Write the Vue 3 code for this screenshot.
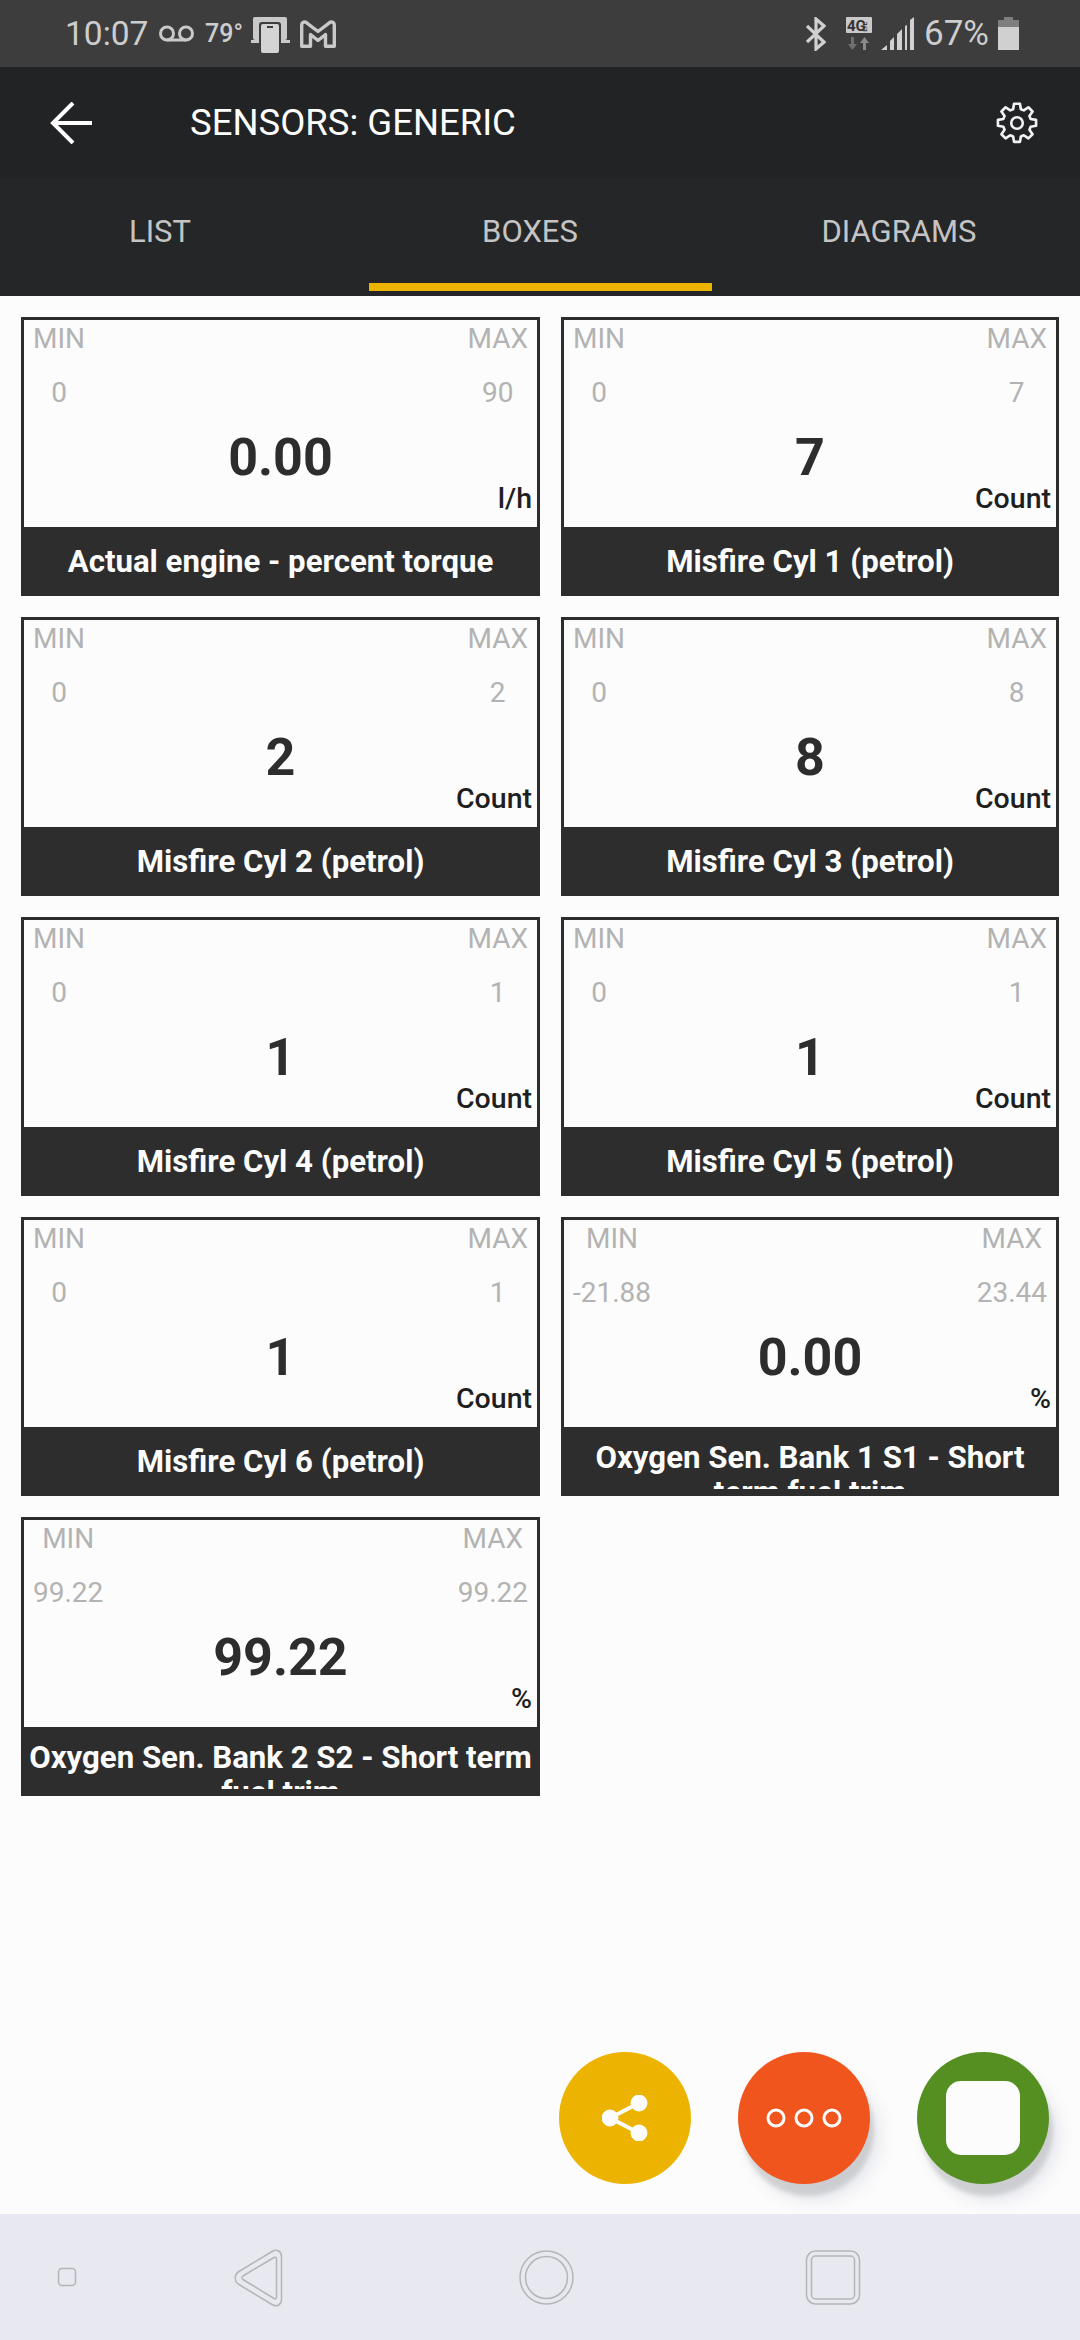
<template>
  <div class="page">
    <div class="status">
      <div class="status-left">
        <span class="time">10:07</span>
        <svg class="ic-vm" viewBox="0 0 35 17" fill="none" stroke="#c9c9c9" stroke-width="3">
          <circle cx="8" cy="8.5" r="6.5" />
          <circle cx="27" cy="8.5" r="6.5" />
          <path d="M8 15h19" />
        </svg>
        <span class="temp">79°</span>
        <svg class="ic-link" viewBox="0 0 39 36">
          <rect x="2" y="0" width="34" height="23" rx="2" fill="#c9c9c9" />
          <path d="M0 23h8v3H0zM29 23h10v3H29z" fill="#c9c9c9" />
          <rect x="8" y="5" width="22" height="31" rx="3" fill="#3d3d3d" />
          <rect x="10" y="7" width="18" height="29" rx="2" fill="#d4d4d4" />
          <rect x="16" y="9" width="6" height="2" fill="#3d3d3d" />
        </svg>
        <svg class="ic-mail" viewBox="0 0 36 28" fill="none" stroke="#c9c9c9" stroke-width="3.400" stroke-linejoin="round">
          <path d="M1.700 26.300V5c0-2.500 2-3.300 4-2.800L18 11.500l12.300-9.300c2-.5 4 .3 4 2.800v21.300H25.500V14.500L18 20.500l-7.500-6v11.800z" />
        </svg>
      </div>
      <div class="status-right">
        <svg class="ic-bt" viewBox="0 0 20 34" fill="none" stroke="#d0d0d0" stroke-width="3.200">
          <path d="M1 9l17 16-8 7V2l8 7L1 25" />
        </svg>
        <svg class="ic-4g" viewBox="0 0 26 33">
          <rect width="26" height="16" rx="1" fill="#c9c9c9" />
          <text x="1" y="14" class="net-4g">4G</text>
          <text x="0" y="0" class="net-lte" transform="translate(20.500 14.500) rotate(-90)">LTE</text>
          <path d="M5 20h3v7h3l-4.500 6L2 27h3z" fill="#6f6f6f" />
          <path d="M17 33h3v-7h3l-4.500-6L14 26h3z" fill="#8a8a8a" />
        </svg>
        <svg class="ic-signal" viewBox="0 0 33 33" fill="#d0d0d0">
          <path d="M0 33l6-5v5zM9 33V24l4-4v13zM16 33V17l5-5v21zM24 33V9l2-1v25zM29 33V3l4-3v33z" />
        </svg>
        <span class="pct">67%</span>
        <div class="battery">
          <div class="cap"></div>
          <div class="empty"></div>
          <div class="full"></div>
        </div>
      </div>
    </div>

    <div class="toolbar">
      <svg class="ic-back" viewBox="0 0 42 42" fill="none" stroke="#fff" stroke-width="4">
        <path d="M42 21H3M23 1L3 21l20 20" />
      </svg>
      <span class="screen-title">SENSORS: GENERIC</span>
      <svg class="ic-gear" viewBox="0 0 24 24" fill="none" stroke="#f2f2f2" stroke-width="1.500" stroke-linejoin="round">
        <circle cx="12" cy="12" r="3.300" />
        <path d="M10.300 1h3.400l.5 3.100 1.700.7 2.600-1.800 2.400 2.400-1.800 2.600.7 1.700 3.100.5v3.400l-3.100.5-.7 1.700 1.800 2.600-2.400 2.400-2.600-1.800-1.700.7-.5 3.100h-3.400l-.5-3.100-1.700-.7-2.600 1.800-2.400-2.400 1.800-2.600-.7-1.700-3.100-.5v-3.400l3.100-.5.7-1.700-1.800-2.600 2.400-2.400 2.600 1.800 1.700-.7z" />
      </svg>
    </div>

    <div class="tabs">
      <div v-for="t in tabs" :key="t.name" class="tab" :class="{ active: t.active }">
        <span class="tab-label" :style="{ paddingRight: t.shift + 'px' }">{{ t.name }}</span>
      </div>
    </div>

    <div class="content">
      <div class="grid">
        <div v-for="c in cards" :key="c.title" class="card">
          <div class="body">
            <div class="limits">
              <div class="limit">
                <span class="limit-label">MIN</span>
                <span class="limit-value">{{ c.min }}</span>
              </div>
              <div class="limit">
                <span class="limit-label">MAX</span>
                <span class="limit-value">{{ c.max }}</span>
              </div>
            </div>
            <div class="value">{{ c.value }}</div>
            <div class="unit">{{ c.unit }}</div>
          </div>
          <div class="title">
            <div class="title-clip">
              <div class="title-text" :class="{ wrapped: c.wrapped }">{{ c.title }}</div>
            </div>
          </div>
        </div>
      </div>

      <div class="fabs">
        <div class="fab yellow">
          <svg width="46" height="46" viewBox="0 0 46 46" fill="#fcfcfc" stroke="#fcfcfc">
            <circle cx="8" cy="23" r="8" />
            <circle cx="37" cy="8" r="8" />
            <circle cx="37" cy="38" r="8" />
            <path d="M8 23L37 8M8 23l29 15" stroke-width="4" fill="none" />
          </svg>
        </div>
        <div class="fab orange raised">
          <svg width="76" height="20" viewBox="0 0 76 20" fill="none" stroke="#fcfcfc" stroke-width="3">
            <circle cx="10" cy="10" r="8" />
            <circle cx="38" cy="10" r="8" />
            <circle cx="66" cy="10" r="8" />
          </svg>
        </div>
        <div class="fab green raised">
          <div class="stop"></div>
        </div>
      </div>
    </div>

    <div class="navbar">
      <svg class="nav-svg" viewBox="0 0 1080 126" fill="none" stroke="#b4b5b8" stroke-width="1.500">
        <rect x="58.500" y="54.500" width="17" height="17" rx="3.500" />
        <path d="M272 37.500c5-3 9.500 0 9.500 5v43c0 5-4.500 8-9.500 5l-33-20c-5-3-5-10 0-13z" />
        <path d="M274 43.500c1.500-1 2.500 0 2.500 1.500v38c0 1.500-1 2.500-2.500 1.500l-31-19c-1.500-1-1.500-2.500 0-3.500z" />
        <circle cx="546.500" cy="63.500" r="26.500" />
        <circle cx="546.500" cy="63.500" r="21" />
        <rect x="806.500" y="37" width="53" height="53" rx="9" />
        <rect x="811.500" y="42" width="43" height="43" rx="4" />
      </svg>
    </div>
  </div>
</template>

<script setup>
const tabs = [
  { name: "LIST", shift: 40 },
  { name: "BOXES", shift: 20, active: true },
  { name: "DIAGRAMS", shift: 2 },
];

const cards = [
  { min: "0", max: "90", value: "0.00", unit: "l/h", title: "Actual engine - percent torque" },
  { min: "0", max: "7", value: "7", unit: "Count", title: "Misfire Cyl 1 (petrol)" },
  { min: "0", max: "2", value: "2", unit: "Count", title: "Misfire Cyl 2 (petrol)" },
  { min: "0", max: "8", value: "8", unit: "Count", title: "Misfire Cyl 3 (petrol)" },
  { min: "0", max: "1", value: "1", unit: "Count", title: "Misfire Cyl 4 (petrol)" },
  { min: "0", max: "1", value: "1", unit: "Count", title: "Misfire Cyl 5 (petrol)" },
  { min: "0", max: "1", value: "1", unit: "Count", title: "Misfire Cyl 6 (petrol)" },
  { min: "-21.88", max: "23.44", value: "0.00", unit: "%", title: "Oxygen Sen. Bank 1 S1 - Short term fuel trim", wrapped: true },
  { min: "99.22", max: "99.22", value: "99.22", unit: "%", title: "Oxygen Sen. Bank 2 S2 - Short term fuel trim", wrapped: true },
];
</script>

<style>
html, body {
  margin: 0;
  background: #fcfcfc;
}
</style>

<style scoped>
.page {
  width: 1080px;
  height: 2340px;
  display: flex;
  flex-direction: column;
  overflow: hidden;
  font-family: Roboto, "Liberation Sans", sans-serif;
  background: #fcfcfc;
}

/* status bar */
.status {
  height: 67px;
  flex: none;
  background: #3d3d3d;
  display: flex;
  justify-content: space-between;
  align-items: center;
  color: #cdcdcd;
}
.status-left {
  display: flex;
  align-items: center;
  padding-left: 65px;
}
.status-right {
  display: flex;
  align-items: center;
  padding-right: 61px;
}
.time {
  font-size: 33.500px;
  width: 94px;
}
.ic-vm { width: 35px; height: 17px; margin-right: 11px; }
.temp { font-size: 25px; font-weight: 500; width: 46px; }
.ic-link { width: 39px; height: 36px; margin-right: 10px; margin-top: 3px; }
.ic-mail { width: 36px; height: 28px; }
.ic-bt { width: 20px; height: 34px; margin-right: 20px; }
.ic-4g { width: 26px; height: 33px; margin-right: 9px; }
.net-4g { font-size: 15px; font-weight: 700; fill: #333; }
.net-lte { font-size: 6px; font-weight: 700; fill: #333; }
.ic-signal { width: 33px; height: 33px; margin-right: 10px; }
.pct { font-size: 35px; width: 74px; }
.battery { width: 21px; height: 33px; display: flex; flex-direction: column; align-items: center; }
.cap { width: 9px; height: 3px; background: #7e7e7e; }
.empty { width: 21px; height: 7px; background: #7e7e7e; }
.full { width: 21px; flex: 1; background: #d0d0d0; }

/* toolbar + tabs */
.toolbar {
  height: 111px;
  flex: none;
  background: #222325;
  display: flex;
  align-items: center;
  padding-left: 50px;
  padding-right: 42px;
}
.ic-back { width: 42px; height: 42px; margin-right: 98px; }
.screen-title {
  flex: 1;
  color: #fff;
  font-size: 36.500px;
}
.ic-gear { width: 42px; height: 42px; }
.tabs {
  height: 118px;
  flex: none;
  background: #252627;
  display: grid;
  grid-template-columns: repeat(3, 1fr);
}
.tab {
  position: relative;
  display: flex;
  justify-content: center;
  padding-top: 36px;
  box-sizing: border-box;
  color: #c4c4c4;
  font-size: 31px;
  line-height: 36px;
}
.tab.active::after {
  content: "";
  position: absolute;
  left: 9px;
  right: 8px;
  bottom: 5px;
  height: 8px;
  background: #ecb400;
}

/* cards */
.content {
  flex: 1;
  position: relative;
  overflow: hidden;
  padding: 21px 0 0 21px;
}
.grid {
  display: grid;
  grid-template-columns: 519px 498px;
  gap: 21px;
}
.card {
  height: 279px;
  display: flex;
  flex-direction: column;
}
.body {
  height: 210px;
  box-sizing: border-box;
  border: 3px solid #2d2d2d;
  border-bottom: 0;
  padding-top: 2px;
  flex: none;
}
.limits {
  display: flex;
  justify-content: space-between;
  padding: 0 9px;
}
.limit {
  display: flex;
  flex-direction: column;
  align-items: center;
  color: #b3b3b3;
  font-size: 28px;
  line-height: 34px;
  gap: 20px;
}
.value {
  margin-top: 18px;
  text-align: center;
  color: #2d2d2d;
  font-size: 52px;
  font-weight: 700;
  line-height: 60px;
}
.unit {
  margin-top: -5px;
  padding-right: 5px;
  text-align: right;
  color: #1f1f1f;
  font-size: 28.500px;
  font-weight: 500;
  line-height: 32px;
}
.title {
  flex: 1;
  background: #2d2d2d;
  padding: 7px 0;
  box-sizing: border-box;
}
.title-clip {
  height: 55px;
  overflow: hidden;
}
.title-text {
  padding-top: 10px;
  text-align: center;
  color: #fcfcfc;
  font-size: 31.200px;
  font-weight: 700;
  line-height: 35px;
}
.title-text.wrapped {
  padding-top: 6px;
}

/* floating buttons */
.fabs {
  position: absolute;
  right: 31px;
  bottom: 30px;
  display: flex;
  gap: 47px;
}
.fab {
  width: 132px;
  height: 132px;
  border-radius: 50%;
  display: flex;
  align-items: center;
  justify-content: center;
}
.yellow { background: #ecb400; }
.orange { background: #f0551e; }
.green { background: #558f21; }
.raised {
  box-shadow: 4px 12px 4px rgba(60, 60, 50, 0.16), 11px 18px 16px rgba(90, 100, 150, 0.12);
}
.stop {
  width: 74px;
  height: 74px;
  border-radius: 15px;
  background: #fcfcfc;
}

/* system nav */
.navbar {
  height: 126px;
  flex: none;
  background: #e7e8f0;
}
.nav-svg {
  display: block;
  width: 1080px;
  height: 126px;
}
</style>
